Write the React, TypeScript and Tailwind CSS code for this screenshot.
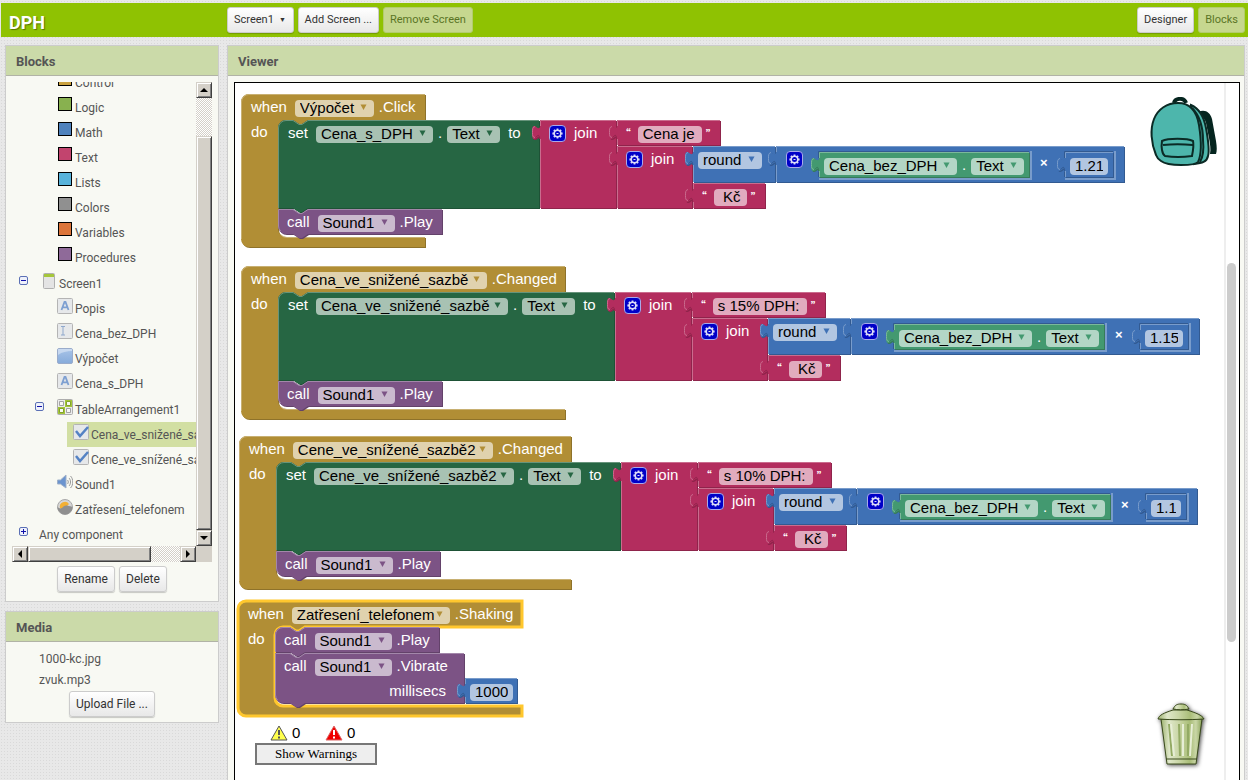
import { useState } from "react";
import type { ReactNode } from "react";
import clsx from "clsx";

type Tone = "event" | "setter" | "call" | "text" | "math" | "getter";
type Shape = "event" | "statement" | "last" | "value" | "inline";
type Pad = "wide" | "normal" | "tight";

type Field =
  | { kind: "label"; text: string }
  | { kind: "dot"; text: string }
  | { kind: "times" }
  | { kind: "open" }
  | { kind: "close" }
  | { kind: "gear" }
  | { kind: "gap"; w: number }
  | { kind: "menu"; text: string; w: number }
  | { kind: "input"; text: string; w: number };

type Block = {
  tone: Tone;
  shape: Shape;
  x: number;
  y: number;
  w: number;
  h: number;
  rows: Field[][];
  pad?: Pad;
  selected?: boolean;
};

type Stack = { id: string; x: number; y: number; blocks: Block[] };

const tones: Record<Tone, { fill: string; light: string; dark: string }> = {
  event: { fill: "#b18e35", light: "#c8b072", dark: "#8e722a" },
  setter: { fill: "#266643", light: "#67947b", dark: "#1e5236" },
  call: { fill: "#7c5385", light: "#a387aa", dark: "#63426a" },
  text: { fill: "#b32d5e", light: "#ca6c8e", dark: "#8f244b" },
  math: { fill: "#3f71b5", light: "#799ccb", dark: "#325a91" },
  getter: { fill: "#439970", light: "#7bb89b", dark: "#367a5a" },
};

const pads: Record<Pad, string> = {
  wide: "pl-[10px]",
  normal: "pl-[9px]",
  tight: "pl-[5px]",
};

const label = (text: string): Field => ({ kind: "label", text });
const dot = (text: string): Field => ({ kind: "dot", text });
const menu = (text: string, w: number): Field => ({ kind: "menu", text, w });
const input = (text: string, w: number): Field => ({ kind: "input", text, w });

function textBlock(x: number, y: number, w: number, text: string, fieldW: number): Block {
  return {
    tone: "text",
    shape: "value",
    x,
    y,
    w,
    h: 25,
    rows: [[{ kind: "open" }, input(text, fieldW), { kind: "close" }]],
  };
}

function playBlock(x: number, y: number, shape: Shape): Block {
  return {
    tone: "call",
    shape,
    x,
    y,
    w: 164,
    h: 25,
    rows: [[label("call"), menu("Sound1", 77), dot(".Play")]],
  };
}

type VatStack = {
  id: string;
  x: number;
  y: number;
  name: string;
  nameW: number;
  event: string;
  headW: number;
  target: string;
  targetW: number;
  shift: number;
  text: string;
  textW: number;
  rate: string;
  rateW: number;
};

// when <component> do: set <label>.Text to join(text, join(round(price * rate), "Kč"))
function vatStack(s: VatStack): Stack {
  const dx = s.shift;
  return {
    id: s.id,
    x: s.x,
    y: s.y,
    blocks: [
      {
        tone: "event",
        shape: "event",
        x: 0,
        y: 0,
        w: s.headW,
        h: 153,
        pad: "wide",
        rows: [[label("when"), menu(s.name, s.nameW), dot(s.event)], [label("do")]],
      },
      {
        tone: "setter",
        shape: "statement",
        x: 37,
        y: 26,
        w: 261 + dx,
        h: 88,
        pad: "wide",
        rows: [[label("set"), menu(s.target, s.targetW), dot("."), menu("Text", 53), label("to")]],
      },
      playBlock(37, 115, "last"),
      {
        tone: "text",
        shape: "value",
        x: 299 + dx,
        y: 26,
        w: 76,
        h: 88,
        rows: [[{ kind: "gear" }, label("join")]],
      },
      textBlock(376 + dx, 26, s.textW + 39, s.text, s.textW),
      {
        tone: "text",
        shape: "value",
        x: 376 + dx,
        y: 52,
        w: 75,
        h: 62,
        rows: [[{ kind: "gear" }, label("join")]],
      },
      {
        tone: "math",
        shape: "value",
        x: 452 + dx,
        y: 52,
        w: 82,
        h: 36,
        pad: "tight",
        rows: [[menu("round", 64)]],
      },
      textBlock(452 + dx, 89, 72, " Kč", 33),
      {
        tone: "math",
        shape: "value",
        x: 535 + dx,
        y: 52,
        w: 310 + s.rateW,
        h: 36,
        pad: "wide",
        rows: [[{ kind: "gear" }, { kind: "gap", w: 221 }, { kind: "times" }]],
      },
      {
        tone: "getter",
        shape: "inline",
        x: 578 + dx,
        y: 58,
        w: 210,
        h: 25,
        pad: "tight",
        rows: [[menu("Cena_bez_DPH", 133), dot("."), menu("Text", 53)]],
      },
      {
        tone: "math",
        shape: "inline",
        x: 824 + dx,
        y: 58,
        w: s.rateW + 10,
        h: 25,
        pad: "tight",
        rows: [[input(s.rate, s.rateW)]],
      },
    ],
  };
}

const stacks: Stack[] = [
  vatStack({
    id: "click",
    x: 6,
    y: 11,
    name: "Výpočet",
    nameW: 79,
    event: ".Click",
    headW: 184,
    target: "Cena_s_DPH",
    targetW: 117,
    shift: 0,
    text: "Cena je ",
    textW: 64,
    rate: "1.21",
    rateW: 38,
  }),
  vatStack({
    id: "changed-15",
    x: 6,
    y: 183,
    name: "Cena_ve_snižené_sazbě",
    nameW: 192,
    event: ".Changed",
    headW: 324,
    target: "Cena_ve_snižené_sazbě",
    targetW: 192,
    shift: 75,
    text: "s 15% DPH: ",
    textW: 94,
    rate: "1.15",
    rateW: 38,
  }),
  vatStack({
    id: "changed-10",
    x: 4,
    y: 353,
    name: "Cene_ve_snížené_sazbě2",
    nameW: 200,
    event: ".Changed",
    headW: 332,
    target: "Cene_ve_snížené_sazbě2",
    targetW: 200,
    shift: 83,
    text: "s 10% DPH: ",
    textW: 94,
    rate: "1.1",
    rateW: 30,
  }),
  {
    id: "shaking",
    x: 3,
    y: 518,
    blocks: [
      {
        tone: "event",
        shape: "event",
        x: 0,
        y: 0,
        w: 284,
        h: 115,
        pad: "wide",
        selected: true,
        rows: [[label("when"), menu("Zatřesení_telefonem", 158), dot(".Shaking")], [label("do")]],
      },
      playBlock(37, 26, "statement"),
      {
        tone: "call",
        shape: "last",
        x: 37,
        y: 52,
        w: 189,
        h: 50,
        rows: [[label("call"), menu("Sound1", 77), dot(".Vibrate")], [label("millisecs")]],
      },
      {
        tone: "math",
        shape: "value",
        x: 227,
        y: 77,
        w: 52,
        h: 25,
        pad: "tight",
        rows: [[input("1000", 43)]],
      },
    ],
  },
];

const NOTCH = "l 6,4 3,0 6,-4";
const NOTCH_BACK = "l -6,4 -3,0 -6,-4";
const TAB_UP = "V 20 c 0,-10 -8,8 -8,-7.5 s 8,2.5 8,-7.5";

function outline({ shape, w, h }: Block) {
  if (shape === "event") {
    return `M 0,8 A 8,8 0 0 1 8,0 H ${w} V 26 H 67 ${NOTCH_BACK} H 45 a 8,8 0 0 0 -8,8 V ${h - 18} a 8,8 0 0 0 8,8 H ${w} V ${h} H 8 a 8,8 0 0 1 -8,-8 Z`;
  }
  if (shape === "statement") {
    return `M 0,8 A 8,8 0 0 1 8,0 H 15 ${NOTCH} H ${w} V ${h} H 30 ${NOTCH_BACK} H 0 Z`;
  }
  if (shape === "last") {
    return `M 0,0 H 15 ${NOTCH} H ${w} V ${h} H 30 ${NOTCH_BACK} H 8 a 8,8 0 0 1 -8,-8 Z`;
  }
  return `M 0,0 H ${w} V ${h} H 0 ${TAB_UP} Z`;
}

function highlight({ shape, w, h }: Block) {
  if (shape === "event") {
    return `M 0.5,${h - 8} V 8 A 7.5,7.5 0 0 1 8,0.5 H ${w} M 40,${h - 12} a 8,8 0 0 0 6,2.5 H ${w}`;
  }
  if (shape === "statement") {
    return `M 0.5,${h} V 8 A 7.5,7.5 0 0 1 8,0.5 H 15 ${NOTCH} H ${w}`;
  }
  if (shape === "last") {
    return `M 2.5,${h - 3} A 8,8 0 0 1 0.5,${h - 8} V 0.5 H 15 ${NOTCH} H ${w}`;
  }
  return `M 0.5,${h} V 19 M -5,17.5 C -7.5,17.500 -7.5,15 -7.5,12.5 C -7.5,9 -7.5,7 -5,6.5 M 0.5,6 V 0.5 H ${w}`;
}

function BlockShape({ block }: { block: Block }) {
  const tone = tones[block.tone];
  const d = outline(block);
  const isValue = block.shape === "value" || block.shape === "inline";
  return (
    <svg
      className="pointer-events-none absolute inset-0 overflow-visible"
      width={block.w}
      height={block.h}
      aria-hidden="true"
    >
      {block.shape === "inline" && (
        <path
          d={`M 0,${block.h + 2} H ${block.w + 2} V -1`}
          fill="none"
          stroke={tones.math.light}
          strokeWidth="2"
        />
      )}
      <path d={d} fill={tone.dark} transform="translate(1,1)" />
      <path d={d} fill={tone.fill} />
      {isValue && <path d="M -4.5,17.5 C -2,15 -0.5,14 -0.5,19" fill="none" stroke={tone.dark} />}
      {block.shape === "inline" && (
        <path
          d={`M -0.5,${block.h} V 19.5 M -0.5,6 V -0.5 H ${block.w}`}
          fill="none"
          stroke={tones.math.dark}
        />
      )}
      <path d={highlight(block)} fill="none" stroke={tone.light} />
      {block.selected && <path d={d} fill="none" stroke="#ffc72e" strokeWidth="3" />}
    </svg>
  );
}

function Gear() {
  return (
    <button type="button" aria-label="Edit inputs" className="size-[17px] shrink-0">
      <svg viewBox="0 0 17 17" className="size-full">
        <rect x="0.5" y="0.5" width="16" height="16" rx="3.5" fill="#0000c8" stroke="#a9a9ea" />
        <circle cx="8.5" cy="8.5" r="3.3" fill="none" stroke="#dcdcf8" strokeWidth="1.6" />
        <path
          d="M8.5 3.400v1.600M8.5 12v1.600M3.400 8.5H5M12 8.5h1.600M4.900 4.900l1.200 1.200M10.900 10.900l1.200 1.200M12.100 4.900l-1.200 1.200M6.100 10.900l-1.200 1.200"
          fill="none"
          stroke="#dcdcf8"
          strokeWidth="1.800"
        />
        <path d="M7.500 8.5h2" stroke="#dcdcf8" />
      </svg>
    </button>
  );
}

// the pill is 17px tall, its control hangs below so descenders and underscores stay visible
const pill = "relative mt-[2px] flex h-[17px] shrink-0 items-start rounded bg-white/60";
const pillControl = "-mt-[2px] h-5 w-full shrink-0 bg-transparent px-[5px] py-0 leading-5 text-black outline-none";

function BlockField({ field, tone }: { field: Field; tone: Tone }) {
  switch (field.kind) {
    case "label":
      return <span>{field.text}</span>;
    case "dot":
      return <span className={clsx("-ml-[3px]", field.text === "." && "-mr-[3px]")}>{field.text}</span>;
    case "times":
      return <span className="mt-2 text-[13px] font-bold">×</span>;
    case "open":
      return <span className="-mr-px font-serif text-[12px] font-bold">“</span>;
    case "close":
      return <span className="-ml-1 font-serif text-[12px] font-bold">”</span>;
    case "gear":
      return <Gear />;
    case "gap":
      return <span className="shrink-0" style={{ width: field.w }} />;
    case "input":
      return (
        <span className={pill} style={{ width: field.w }}>
          <input aria-label="Value" defaultValue={field.text} className={pillControl} />
        </span>
      );
    case "menu":
      return (
        <span className={pill} style={{ width: field.w }}>
          <select aria-label={field.text} className={clsx("appearance-none", pillControl)}>
            <option>{field.text}</option>
          </select>
          <svg
            viewBox="0 0 7 6"
            className="pointer-events-none absolute top-[4px] right-[7px] h-[6px] w-[7px]"
            aria-hidden="true"
          >
            <path d="M0.5 0.5h6L3.5 6z" fill={tones[tone].fill} />
          </svg>
        </span>
      );
  }
}

function BlockNode({ block }: { block: Block }) {
  return (
    <div
      className="absolute"
      style={{ left: block.x, top: block.y, width: block.w, height: block.h }}
    >
      <BlockShape block={block} />
      <div className={clsx("relative", pads[block.pad ?? "normal"])}>
        {block.rows.map((row, i) => (
          <div
            key={i}
            className={clsx(
              "flex items-center gap-2",
              i === 0 ? "h-[26px]" : "h-6",
              i > 0 && block.tone === "call" && "justify-end pr-[18px]",
            )}
          >
            {row.map((field, j) => (
              <BlockField key={j} field={field} tone={block.tone} />
            ))}
          </div>
        ))}
      </div>
    </div>
  );
}

function Backpack() {
  return (
    <svg viewBox="0 0 68 70" className="h-[70px] w-[68px]" aria-hidden="true">
      <path
        d="M48 15c7-3 12 0 14 7l4 22c1 6 1 10 0 13h-6c1-5 0-10-1-16l-3-15c-1-4-3-6-6-6z"
        fill="#05251f"
      />
      <path d="M24 6c1-5 10-6 12 0" fill="none" stroke="#05251f" strokeWidth="4" />
      <path
        d="M41 8c9 4 13 12 15 23 2 11 4 22 2 28-1 6-6 7-14 8z"
        fill="#4db6ac"
        stroke="#0b2a25"
        strokeWidth="2"
      />
      <path d="M42 11c8 8 11 20 11 32 1 10 0 17-3 22" fill="none" stroke="#0b2a25" strokeWidth="2" />
      <path
        d="M6 58C1 46 0 32 4 22 8 12 17 6 28 6c13 0 19 10 21 22 2 13 3 29-1 37-2 3-10 3-17 3-8 0-16-1-20-4-3-2-4-3-5-6z"
        fill="#4db6ac"
        stroke="#0b2a25"
        strokeWidth="2"
      />
      <path
        d="M12 44c6-3 25-3 31 0 1 4 0 10-1 15-8 1-20 1-27 0-3-2-4-9-3-15zM13 48c9-1 20-1 30 0"
        fill="none"
        stroke="#0b2a25"
        strokeWidth="2"
      />
    </svg>
  );
}

function Trash() {
  return (
    <svg viewBox="0 0 50 64" className="h-16 w-[50px] drop-shadow-[1px_1px_2px_#444]" aria-hidden="true">
      <defs>
        <linearGradient id="can" x1="0" x2="1">
          <stop offset="0" stopColor="#9db26f" />
          <stop offset="0.2" stopColor="#dfe7c9" />
          <stop offset="0.45" stopColor="#c8d5a4" />
          <stop offset="0.7" stopColor="#a9bd78" />
          <stop offset="0.85" stopColor="#c9d6a6" />
          <stop offset="1" stopColor="#8ca55c" />
        </linearGradient>
      </defs>
      <path d="M4 16h41l-6 45H10z" fill="url(#can)" stroke="#3a4a1c" />
      <path d="M9 56h31" fill="none" stroke="#3a4a1c" />
      <path d="M12 21l3 32M22 21l1 32M31 21v32" fill="none" stroke="#93aa64" strokeWidth="2" />
      <path d="M14 21l3 32M26 21v32M35 21l-2 32" fill="none" stroke="#e7eed6" strokeWidth="2" />
      <path d="M1 16c1-4 6-6 15-9h14c9 3 15 5 17 9-14 1-32 1-46 0z" fill="url(#can)" stroke="#3a4a1c" />
      <path d="M16 6c2-4 4-5 8-5s6 1 8 5c-6 1-11 1-16 0z" fill="url(#can)" stroke="#3a4a1c" />
    </svg>
  );
}

function Warning({ id, fill, mark, stroke }: { id: string; fill: string; mark: string; stroke: string }) {
  return (
    <svg viewBox="0 0 18 16" className="h-4 w-[18px]" aria-label={id} role="img">
      <path d="M9 1l8 14H1z" fill={fill} stroke={stroke} strokeLinejoin="round" />
      <path d="M9 5v5M9 11.5v2" stroke={mark} strokeWidth="2" />
    </svg>
  );
}

function Tile({ children }: { children?: ReactNode }) {
  return (
    <svg viewBox="0 0 16 16" className="size-4" aria-hidden="true">
      <rect x="0.5" y="0.5" width="15" height="15" rx="1" fill="#e6e8ea" stroke="#b4b4b4" />
      {children}
    </svg>
  );
}

const icons: Record<string, ReactNode> = {
  screen: (
    <svg viewBox="0 0 16 16" className="size-4" aria-hidden="true">
      <rect x="2.5" y="0.5" width="11" height="15" rx="1" fill="#e4e4e4" stroke="#b0b0b0" />
      <path d="M3 1h10v3H3z" fill="#a5c63b" />
    </svg>
  ),
  label: (
    <Tile>
      <path d="M4.5 12L7.5 4h1l3 8M5.7 9.3h4.6" fill="none" stroke="#7d9fd1" strokeWidth="1.8" />
    </Tile>
  ),
  textbox: (
    <Tile>
      <path d="M4 3.5h4M4 12h4M6 3.5V12" fill="none" stroke="#8fa8cc" />
    </Tile>
  ),
  button: (
    <svg viewBox="0 0 16 16" className="size-4" aria-hidden="true">
      <defs>
        <linearGradient id="btn" x2="0" y2="1">
          <stop offset="0" stopColor="#a9c4e8" />
          <stop offset="1" stopColor="#86abda" />
        </linearGradient>
      </defs>
      <rect x="0.5" y="0.5" width="15" height="15" rx="1.5" fill="url(#btn)" stroke="#9aaccb" />
      <path d="M1 7C5 4 10 3 15 3V1H1z" fill="#dfeaf7" opacity="0.6" />
    </svg>
  ),
  table: (
    <svg viewBox="0 0 16 16" className="size-4" aria-hidden="true">
      <rect x="0.5" y="0.5" width="15" height="15" rx="1" fill="#ececec" stroke="#adadad" />
      <path d="M8 1h7v7H8zM1 8h7v7H1z" fill="#a4c639" />
      <g fill="#f8f9f3" stroke="#a3a3a3">
        <path d="M2.5 2.5h4v4h-4zM9.5 9.5h4v4h-4z" />
        <path d="M9.5 2.5h4v4h-4zM2.5 9.5h4v4h-4z" stroke="#83a329" />
      </g>
    </svg>
  ),
  check: (
    <Tile>
      <path d="M3 7l4 5 8-9" fill="none" stroke="#5482c4" strokeWidth="2.5" />
    </Tile>
  ),
  sound: (
    <svg viewBox="0 0 16 16" className="size-4" aria-hidden="true">
      <path d="M0.5 6h3L9 1v13L3.5 10h-3z" fill="#6b94cf" stroke="#9fb0c8" />
      <path d="M10.5 6c1 1 1 3 0 4M12 4c2 2 2 6 0 8M13.5 2c3 3 3 9 0 12" fill="none" stroke="#999" />
    </svg>
  ),
  accelerometer: (
    <svg viewBox="0 0 16 16" className="size-4" aria-hidden="true">
      <circle cx="8" cy="8" r="7.5" fill="#d6d6d6" stroke="#a8a8a8" />
      <path d="M3 9a5 5 0 0 1 9-4l-3 3-4 3z" fill="#f3b033" />
      <path d="M0.500 8c2 2 4 2 6-0.500 2-1.500 4-1 9 0.500a7.500 7.500 0 0 1-15 0z" fill="#8f8f8f" />
    </svg>
  ),
};

type TreeRow = {
  text: string;
  className: string;
  icon?: string;
  swatch?: string;
  toggle?: "plus" | "minus";
};

const tree: TreeRow[] = [
  { text: "Control", swatch: "bg-[#c9a13e]", className: "h-[25px] pl-[46px]" },
  { text: "Logic", swatch: "bg-[#88b14f]", className: "h-[25px] pl-[46px]" },
  { text: "Math", swatch: "bg-[#4f82bd]", className: "h-[25px] pl-[46px]" },
  { text: "Text", swatch: "bg-[#c2446e]", className: "h-[25px] pl-[46px]" },
  { text: "Lists", swatch: "bg-[#58b3db]", className: "h-[25px] pl-[46px]" },
  { text: "Colors", swatch: "bg-[#909090]", className: "h-[25px] pl-[46px]" },
  { text: "Variables", swatch: "bg-[#dc753a]", className: "h-[25px] pl-[46px]" },
  { text: "Procedures", swatch: "bg-[#8f6a99]", className: "h-[26px] pl-[46px]" },
  { text: "Screen1", icon: "screen", toggle: "minus", className: "h-[25px] pl-[7px]" },
  { text: "Popis", icon: "label", className: "h-[25px] pl-[45px]" },
  { text: "Cena_bez_DPH", icon: "textbox", className: "h-[25px] pl-[45px]" },
  { text: "Výpočet", icon: "button", className: "h-[25px] pl-[45px]" },
  { text: "Cena_s_DPH", icon: "label", className: "h-[26px] pl-[45px]" },
  { text: "TableArrangement1", icon: "table", toggle: "minus", className: "h-[25px] pl-[23px]" },
  {
    text: "Cena_ve_snižené_sazbě",
    icon: "check",
    className: "h-[25px] ml-[55px] pl-[6px] bg-[#d2dfa3]",
  },
  { text: "Cene_ve_snížené_sazbě2", icon: "check", className: "h-[25px] pl-[61px]" },
  { text: "Sound1", icon: "sound", className: "h-[25px] pl-[45px]" },
  { text: "Zatřesení_telefonem", icon: "accelerometer", className: "h-[25px] pl-[45px]" },
  { text: "Any component", toggle: "plus", className: "h-[25px] pl-[7px]" },
];

function Toggle({ state }: { state: "plus" | "minus" }) {
  return (
    <button
      type="button"
      aria-label={state === "plus" ? "Expand" : "Collapse"}
      className="w-[22px] shrink-0 pt-[3px]"
    >
      <svg viewBox="0 0 9 9" className="size-[9px]">
        <rect x="0.5" y="0.5" width="8" height="8" rx="1.5" fill="#eef1fb" stroke="#5b70b5" />
        <path d={state === "plus" ? "M2 4.5h5M4.5 2v5" : "M2 4.5h5"} stroke="#1111aa" />
      </svg>
    </button>
  );
}

function Tree() {
  return (
    <ul className="-mt-3">
      {tree.map((row) => (
        <li key={row.text} className={clsx("flex items-start pt-[2px]", row.className)}>
          {row.toggle && <Toggle state={row.toggle} />}
          {row.swatch && <span className={clsx("size-[14px] shrink-0 border border-black", row.swatch)} />}
          {row.icon && <span className="shrink-0">{icons[row.icon]}</span>}
          <span
            className={clsx("leading-[22px]", row.icon && "ml-[2px]", row.swatch && "ml-[3px]", !row.icon && !row.swatch && "-ml-[2px]")}
          >
            {row.text}
          </span>
        </li>
      ))}
    </ul>
  );
}

const raised =
  "border border-t-[#d4d0c8] border-l-[#d4d0c8] border-r-[#404040] border-b-[#404040] bg-[#d4d0c8] shadow-[inset_1px_1px_0_#fff,inset_-1px_-1px_0_#808080]";
const track = "bg-[#e9e7e3] bg-[repeating-conic-gradient(#d4d0c8_0_25%,#fff_0_50%)] bg-[length:2px_2px]";

function ScrollButton({ name, d }: { name: string; d: string }) {
  return (
    <button
      type="button"
      aria-label={name}
      className={clsx("flex size-4 shrink-0 items-center justify-center", raised)}
    >
      <svg viewBox="0 0 8 8" className="size-2">
        <path d={d} />
      </svg>
    </button>
  );
}

function GrayButton({ children }: { children: ReactNode }) {
  return (
    <button
      type="button"
      className="h-[26px] rounded-[3px] border border-[#ccc] bg-linear-to-b from-white to-[#e8e8e8] px-1.5 whitespace-nowrap text-[#333] shadow-[0_1px_1px_#0003]"
    >
      {children}
    </button>
  );
}

function DisabledButton({ children }: { children: ReactNode }) {
  return (
    <button
      type="button"
      disabled
      className="h-[26px] rounded-[3px] border border-[#b3cc6e] bg-[#c6d78f] px-1.5 whitespace-nowrap text-[#5a7526]"
    >
      {children}
    </button>
  );
}

function PanelTitle({ children }: { children: ReactNode }) {
  return (
    <h2 className="flex h-[30px] items-center border-b border-[#b1b3a6] bg-[#cbdaa9] px-[10px] pt-[3px] text-[13px] font-bold text-[#555]">
      {children}
    </h2>
  );
}

export default function App() {
  const [showWarnings, setShowWarnings] = useState(false);

  return (
    <div className="flex min-h-screen flex-col bg-[#e8e8e8] bg-[radial-gradient(#d9d9d9_1px,transparent_1px)] bg-[length:3px_3px] pt-[3px] font-[Roboto,sans-serif] text-[12px] text-[#555]">
      <header className="ml-px flex h-[34px] items-center gap-1 bg-[#8fc202] pr-[3px] pl-2 text-[11px]">
        <h1 className="w-[214px] pt-1 text-[18px] font-bold text-white [text-shadow:1px_1px_1px_#0006]">
          DPH
        </h1>
        <div className="flex flex-1 gap-1">
          <GrayButton>
            Screen1 <span className="ml-0.5 inline-block w-2 align-[1px] text-[7px]">▼</span>
          </GrayButton>
          <GrayButton>Add Screen ...</GrayButton>
          <DisabledButton>Remove Screen</DisabledButton>
        </div>
        <GrayButton>Designer</GrayButton>
        <DisabledButton>Blocks</DisabledButton>
      </header>

      <div className="flex flex-1 gap-2 pt-2 pr-[3px] pl-[5px]">
        <aside className="flex w-[214px] shrink-0 flex-col gap-[9px]">
          <section className="border border-[#ccc] bg-[#f8f9f3]">
            <PanelTitle>Blocks</PanelTitle>
            <div className="flex flex-col px-1.5 pt-[6px] pb-[9px]">
              <div className="flex h-[464px]">
                <div className="min-w-0 flex-1 overflow-hidden whitespace-nowrap">
                  <Tree />
                </div>
                <div className={clsx("flex w-4 flex-col", track)}>
                  <ScrollButton name="Scroll up" d="M0 6h8L4 2z" />
                  <div className={clsx("mt-[38px] flex-1", raised)} />
                  <ScrollButton name="Scroll down" d="M0 2h8L4 6z" />
                </div>
              </div>
              <div className={clsx("flex h-4", track)}>
                <ScrollButton name="Scroll left" d="M6 0v8L2 4z" />
                <div className={clsx("mr-[29px] flex-1", raised)} />
                <ScrollButton name="Scroll right" d="M2 0v8l4-4z" />
                <div className="w-4 bg-[#d4d0c8]" />
              </div>
              <div className="mt-1 flex justify-center gap-1">
                <GrayButton>Rename</GrayButton>
                <GrayButton>Delete</GrayButton>
              </div>
            </div>
          </section>

          <section className="border border-[#ccc] bg-[#f8f9f3] pb-[5px]">
            <PanelTitle>Media</PanelTitle>
            <ul className="pt-[7px] pl-[33px] leading-[21px]">
              <li>1000-kc.jpg</li>
              <li>zvuk.mp3</li>
            </ul>
            <div className="flex justify-center">
              <GrayButton>Upload File ...</GrayButton>
            </div>
          </section>
        </aside>

        <main className="flex min-w-0 flex-1 flex-col border border-b-0 border-[#ccc] bg-[#f8f9f3]">
          <PanelTitle>Viewer</PanelTitle>
          <div className="relative mt-[6px] mr-1 ml-[6px] flex-1 overflow-hidden border border-b-0 border-black bg-white font-['Liberation_Sans',Arial,sans-serif] text-[15px] whitespace-nowrap text-white">
            {stacks.map((stack) => (
              <div key={stack.id} className="absolute" style={{ left: stack.x, top: stack.y }}>
                {stack.blocks.map((block, i) => (
                  <BlockNode key={i} block={block} />
                ))}
              </div>
            ))}

            <div className="absolute top-[641px] left-5 w-[122px] text-black">
              <div className="flex h-[18px] items-center gap-1 pl-[15px]">
                <Warning id="Warnings" fill="#ffff4d" stroke="#555" mark="#555" />
                <span className="w-[29px]">0</span>
                <Warning id="Errors" fill="#f00000" stroke="#d66" mark="#fff" />
                <span>0</span>
              </div>
              <button
                type="button"
                onClick={() => setShowWarnings(!showWarnings)}
                className="mt-px h-[22px] w-full border-2 border-[#777] bg-[#eee] font-['Liberation_Serif',serif] text-[13px] leading-[18px]"
              >
                {showWarnings ? "Hide Warnings" : "Show Warnings"}
              </button>
            </div>

            <div className="absolute top-[14px] right-[21px]">
              <Backpack />
            </div>
            <div className="absolute top-[620px] right-8">
              <Trash />
            </div>
            <div className="absolute inset-y-0 right-0 w-[15px] border-l-2 border-[#eee]">
              <div className="mt-[180px] ml-px h-[379px] w-[9px] rounded-full bg-[#ccc]" />
            </div>
          </div>
        </main>
      </div>
    </div>
  );
}
